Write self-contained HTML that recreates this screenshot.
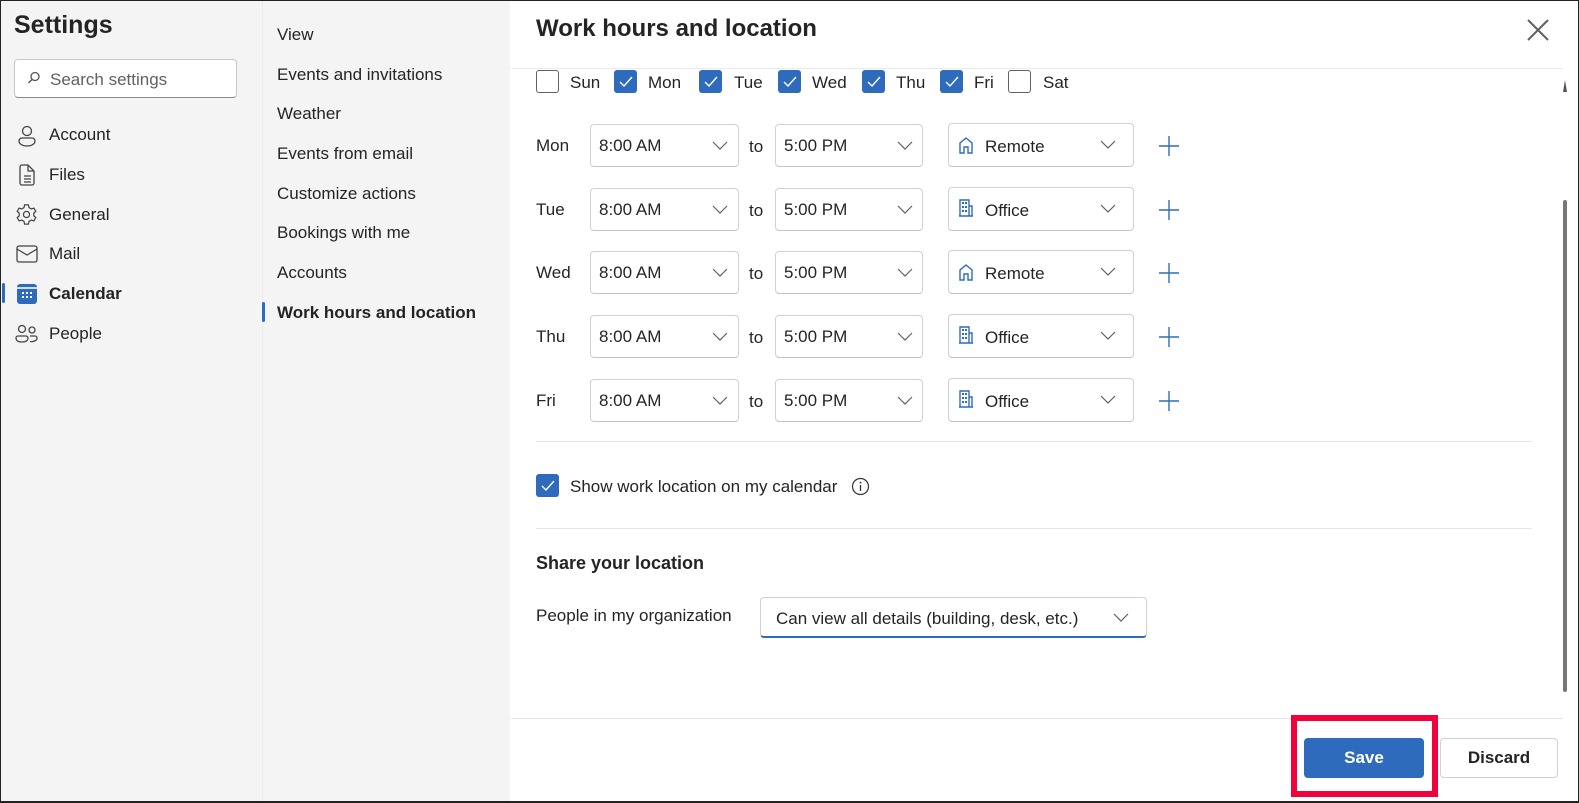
<!DOCTYPE html>
<html><head><meta charset="utf-8"><style>
*{box-sizing:border-box;margin:0;padding:0}
body{width:1579px;height:803px;overflow:hidden;font-family:"Liberation Sans",sans-serif;color:#242424;background:#fff;position:relative}
.frame{position:absolute;left:0;top:0;width:1579px;height:803px;border:1px solid #222;border-bottom:2px solid #222;pointer-events:none}
.left{position:absolute;left:1px;top:1px;width:261px;height:801px;background:#f4f4f4}
.mid{position:absolute;left:262px;top:1px;width:248px;height:801px;background:#f4f4f4;border-left:1px solid #ebebeb}
.abs{position:absolute;white-space:nowrap}
.t17{font-size:17px}
.box{position:absolute;border:1px solid #d1d1d1;border-bottom-color:#c4c4c4;border-radius:4px;background:#fff;font-size:17px}
.cb{position:absolute;width:23px;height:23px;border-radius:3px}
.on{background:#2f6bbd}
.off{border:1px solid #616161;background:#fff}
.chev{position:absolute}
</style></head><body>
<div class="left"></div>
<div class="mid"></div>
<div class="abs" style="left:14px;top:11px;font-size:25px;font-weight:600">Settings</div>
<div class="box" style="left:14px;top:59px;width:223px;height:39px;border-color:#c8c8c8;border-bottom-color:#8a8a8a"></div>
<svg class="abs" style="left:27px;top:71px" width="14" height="14" viewBox="0 0 14 14"><circle cx="8" cy="5.5" r="4" fill="none" stroke="#555" stroke-width="1.3"/><path d="M5 8.5L1.5 12" stroke="#555" stroke-width="1.4"/></svg>
<div class="abs t17" style="left:50px;top:70px;color:#616161">Search settings</div>

<svg class="abs" style="left:16px;top:125px" width="22" height="22" viewBox="0 0 22 22" fill="none" stroke="#444" stroke-width="1.3"><circle cx="11" cy="6" r="4.5"/><path d="M3 16a3 3 0 0 1 3-3h10a3 3 0 0 1 3 3c0 3-3.5 5-8 5s-8-2-8-5z"/></svg>
<div class="abs t17" style="left:49px;top:125px">Account</div>
<svg class="abs" style="left:17px;top:164px" width="20" height="22" viewBox="0 0 20 22" fill="none" stroke="#444" stroke-width="1.3"><path d="M3 3a2 2 0 0 1 2-2h6l6 6v12a2 2 0 0 1-2 2H5a2 2 0 0 1-2-2z"/><path d="M11 1v6h6M7 12h7M7 15h7M7 18h7"/></svg>
<div class="abs t17" style="left:49px;top:165px">Files</div>
<svg class="abs" style="left:15px;top:203px" width="23" height="23" viewBox="0 0 24 24" fill="none" stroke="#444" stroke-width="1.3"><circle cx="12" cy="12" r="3.2"/><path d="M10 2h4l.6 2.8 2.4 1.4 2.7-.9 2 3.4-2.1 1.9v2.8l2.1 1.9-2 3.4-2.7-.9-2.4 1.4L14 22h-4l-.6-2.8-2.4-1.4-2.7.9-2-3.4 2.1-1.9v-2.8L2.3 8.7l2-3.4 2.7.9 2.4-1.4z"/></svg>
<div class="abs t17" style="left:49px;top:205px">General</div>
<svg class="abs" style="left:16px;top:245px" width="22" height="18" viewBox="0 0 22 18" fill="none" stroke="#444" stroke-width="1.3"><rect x="1" y="1" width="20" height="16" rx="2"/><path d="M1 4l10 6 10-6"/></svg>
<div class="abs t17" style="left:49px;top:244px">Mail</div>
<div class="abs" style="left:2px;top:283px;width:3px;height:20px;background:#2f6bbd;border-radius:2px"></div>
<svg class="abs" style="left:17px;top:284px" width="20" height="20" viewBox="0 0 20 20"><rect x="0" y="0" width="20" height="20" rx="3" fill="#2f6bbd"/><rect x="0" y="3" width="20" height="2" fill="#cfe0f5"/><g fill="#fff"><rect x="5" y="8" width="2" height="2"/><rect x="9" y="8" width="2" height="2"/><rect x="13" y="8" width="2" height="2"/><rect x="5" y="12" width="2" height="2"/><rect x="9" y="12" width="2" height="2"/><rect x="13" y="12" width="2" height="2"/></g></svg>
<div class="abs t17" style="left:49px;top:284px;font-weight:700">Calendar</div>
<svg class="abs" style="left:15px;top:324px" width="24" height="20" viewBox="0 0 24 20" fill="none" stroke="#444" stroke-width="1.3"><circle cx="7" cy="5" r="3.5"/><circle cx="17" cy="6" r="3"/><path d="M1 14a2 2 0 0 1 2-2h8a2 2 0 0 1 2 2c0 3-3 4-6 4s-6-1-6-4zM15 17.5c4 .5 7-1 7-3.5a2 2 0 0 0-2-2h-5"/></svg>
<div class="abs t17" style="left:49px;top:324px">People</div>

<div class="abs t17" style="left:277px;top:25px">View</div>
<div class="abs t17" style="left:277px;top:65px">Events and invitations</div>
<div class="abs t17" style="left:277px;top:104px">Weather</div>
<div class="abs t17" style="left:277px;top:144px">Events from email</div>
<div class="abs t17" style="left:277px;top:184px">Customize actions</div>
<div class="abs t17" style="left:277px;top:223px">Bookings with me</div>
<div class="abs t17" style="left:277px;top:263px">Accounts</div>
<div class="abs" style="left:262px;top:302px;width:3px;height:20px;background:#2f6bbd;border-radius:2px"></div>
<div class="abs t17" style="left:277px;top:303px;font-weight:600">Work hours and location</div>

<div class="abs" style="left:536px;top:15px;font-size:24px;font-weight:600">Work hours and location</div>
<svg class="abs" style="left:1527px;top:19px" width="22" height="22" viewBox="0 0 22 22" stroke="#616161" stroke-width="2"><path d="M1 1l20 20M21 1L1 21"/></svg>
<div class="abs" style="left:511px;top:68px;width:1052px;height:1px;background:#ebebeb"></div>
<div class="abs" style="left:1563px;top:80px;width:4px;height:12px;background:#555;clip-path:polygon(50% 0,100% 100%,0 100%)"></div>
<div class="abs" style="left:1563px;top:200px;width:4px;height:492px;background:#777;border-radius:2px"></div>

<div class="cb off" style="left:536px;top:70px"></div><div class="abs t17" style="left:570px;top:73px">Sun</div>
<div class="cb on" style="left:614px;top:70px"></div><div class="abs t17" style="left:648px;top:73px">Mon</div>
<div class="cb on" style="left:699px;top:70px"></div><div class="abs t17" style="left:734px;top:73px">Tue</div>
<div class="cb on" style="left:778px;top:70px"></div><div class="abs t17" style="left:812px;top:73px">Wed</div>
<div class="cb on" style="left:862px;top:70px"></div><div class="abs t17" style="left:896px;top:73px">Thu</div>
<div class="cb on" style="left:940px;top:70px"></div><div class="abs t17" style="left:974px;top:73px">Fri</div>
<div class="cb off" style="left:1008px;top:70px"></div><div class="abs t17" style="left:1043px;top:73px">Sat</div>
<svg width="0" height="0" style="position:absolute"><defs>
<symbol id="ck" viewBox="0 0 23 23"><path d="M6 12l4 4 8-9" fill="none" stroke="#fff" stroke-width="1.4"/></symbol>
<symbol id="cv" viewBox="0 0 16 10"><path d="M1 1l7 7 7-7" fill="none" stroke="#616161" stroke-width="1.2"/></symbol>
<symbol id="home" viewBox="0 0 16 18"><path d="M2 17V7l6-5 6 5v10h-4v-6H6v6z" fill="none" stroke="#2f6bbd" stroke-width="1.4"/></symbol>
<symbol id="bld" viewBox="0 0 16 18"><path d="M2 17V1h9v16M11 7h3v10M1 17h14" fill="none" stroke="#2f6bbd" stroke-width="1.4"/><g fill="#2f6bbd"><rect x="4" y="3" width="2" height="2"/><rect x="7" y="3" width="2" height="2"/><rect x="4" y="7" width="2" height="2"/><rect x="7" y="7" width="2" height="2"/><rect x="4" y="11" width="2" height="2"/><rect x="7" y="11" width="2" height="2"/></g></symbol>
<symbol id="pl" viewBox="0 0 22 22"><path d="M11 1v20M1 11h20" stroke="#2f6bbd" stroke-width="1.4"/></symbol>
</defs></svg>
<svg class="abs" style="left:614px;top:70px" width="23" height="23"><use href="#ck"/></svg>
<svg class="abs" style="left:699px;top:70px" width="23" height="23"><use href="#ck"/></svg>
<svg class="abs" style="left:778px;top:70px" width="23" height="23"><use href="#ck"/></svg>
<svg class="abs" style="left:862px;top:70px" width="23" height="23"><use href="#ck"/></svg>
<svg class="abs" style="left:940px;top:70px" width="23" height="23"><use href="#ck"/></svg>

<div id="rows"></div>
<!-- rows -->
<div class="abs t17" style="left:536px;top:136px">Mon</div>
<div class="box" style="left:590px;top:124px;width:149px;height:43px"><span class="abs" style="left:8px;top:11px">8:00 AM</span><svg class="chev" style="left:121px;top:16px" width="16" height="10"><use href="#cv"/></svg></div>
<div class="abs t17" style="left:749px;top:137px">to</div>
<div class="box" style="left:775px;top:124px;width:148px;height:43px"><span class="abs" style="left:8px;top:11px">5:00 PM</span><svg class="chev" style="left:121px;top:16px" width="16" height="10"><use href="#cv"/></svg></div>
<div class="box" style="left:948px;top:123px;width:186px;height:44px"><svg class="abs" style="left:9px;top:12px" width="16" height="18"><use href="#home"/></svg><span class="abs" style="left:36px;top:13px">Remote</span><svg class="chev" style="left:151px;top:16px" width="16" height="10"><use href="#cv"/></svg></div>
<svg class="abs" style="left:1158px;top:135px" width="22" height="22"><use href="#pl"/></svg>

<div class="abs t17" style="left:536px;top:200px">Tue</div>
<div class="box" style="left:590px;top:188px;width:149px;height:43px"><span class="abs" style="left:8px;top:11px">8:00 AM</span><svg class="chev" style="left:121px;top:16px" width="16" height="10"><use href="#cv"/></svg></div>
<div class="abs t17" style="left:749px;top:201px">to</div>
<div class="box" style="left:775px;top:188px;width:148px;height:43px"><span class="abs" style="left:8px;top:11px">5:00 PM</span><svg class="chev" style="left:121px;top:16px" width="16" height="10"><use href="#cv"/></svg></div>
<div class="box" style="left:948px;top:187px;width:186px;height:44px"><svg class="abs" style="left:9px;top:11px" width="16" height="18"><use href="#bld"/></svg><span class="abs" style="left:36px;top:13px">Office</span><svg class="chev" style="left:151px;top:16px" width="16" height="10"><use href="#cv"/></svg></div>
<svg class="abs" style="left:1158px;top:199px" width="22" height="22"><use href="#pl"/></svg>

<div class="abs t17" style="left:536px;top:263px">Wed</div>
<div class="box" style="left:590px;top:251px;width:149px;height:43px"><span class="abs" style="left:8px;top:11px">8:00 AM</span><svg class="chev" style="left:121px;top:16px" width="16" height="10"><use href="#cv"/></svg></div>
<div class="abs t17" style="left:749px;top:264px">to</div>
<div class="box" style="left:775px;top:251px;width:148px;height:43px"><span class="abs" style="left:8px;top:11px">5:00 PM</span><svg class="chev" style="left:121px;top:16px" width="16" height="10"><use href="#cv"/></svg></div>
<div class="box" style="left:948px;top:250px;width:186px;height:44px"><svg class="abs" style="left:9px;top:12px" width="16" height="18"><use href="#home"/></svg><span class="abs" style="left:36px;top:13px">Remote</span><svg class="chev" style="left:151px;top:16px" width="16" height="10"><use href="#cv"/></svg></div>
<svg class="abs" style="left:1158px;top:262px" width="22" height="22"><use href="#pl"/></svg>

<div class="abs t17" style="left:536px;top:327px">Thu</div>
<div class="box" style="left:590px;top:315px;width:149px;height:43px"><span class="abs" style="left:8px;top:11px">8:00 AM</span><svg class="chev" style="left:121px;top:16px" width="16" height="10"><use href="#cv"/></svg></div>
<div class="abs t17" style="left:749px;top:328px">to</div>
<div class="box" style="left:775px;top:315px;width:148px;height:43px"><span class="abs" style="left:8px;top:11px">5:00 PM</span><svg class="chev" style="left:121px;top:16px" width="16" height="10"><use href="#cv"/></svg></div>
<div class="box" style="left:948px;top:314px;width:186px;height:44px"><svg class="abs" style="left:9px;top:11px" width="16" height="18"><use href="#bld"/></svg><span class="abs" style="left:36px;top:13px">Office</span><svg class="chev" style="left:151px;top:16px" width="16" height="10"><use href="#cv"/></svg></div>
<svg class="abs" style="left:1158px;top:326px" width="22" height="22"><use href="#pl"/></svg>

<div class="abs t17" style="left:536px;top:391px">Fri</div>
<div class="box" style="left:590px;top:379px;width:149px;height:43px"><span class="abs" style="left:8px;top:11px">8:00 AM</span><svg class="chev" style="left:121px;top:16px" width="16" height="10"><use href="#cv"/></svg></div>
<div class="abs t17" style="left:749px;top:392px">to</div>
<div class="box" style="left:775px;top:379px;width:148px;height:43px"><span class="abs" style="left:8px;top:11px">5:00 PM</span><svg class="chev" style="left:121px;top:16px" width="16" height="10"><use href="#cv"/></svg></div>
<div class="box" style="left:948px;top:378px;width:186px;height:44px"><svg class="abs" style="left:9px;top:11px" width="16" height="18"><use href="#bld"/></svg><span class="abs" style="left:36px;top:13px">Office</span><svg class="chev" style="left:151px;top:16px" width="16" height="10"><use href="#cv"/></svg></div>
<svg class="abs" style="left:1158px;top:390px" width="22" height="22"><use href="#pl"/></svg>

<div class="abs" style="left:536px;top:441px;width:996px;height:1px;background:#e6e6e6"></div>
<div class="cb on" style="left:536px;top:474px"></div>
<svg class="abs" style="left:536px;top:474px" width="23" height="23"><use href="#ck"/></svg>
<div class="abs t17" style="left:570px;top:477px">Show work location on my calendar</div>
<svg class="abs" style="left:851px;top:477px" width="19" height="19" viewBox="0 0 19 19"><circle cx="9.5" cy="9.5" r="8" fill="none" stroke="#333" stroke-width="1.2"/><path d="M9.5 8v6" stroke="#333" stroke-width="1.3"/><circle cx="9.5" cy="5.6" r="0.9" fill="#333"/></svg>
<div class="abs" style="left:536px;top:528px;width:996px;height:1px;background:#e6e6e6"></div>
<div class="abs" style="left:536px;top:553px;font-size:18px;font-weight:600">Share your location</div>
<div class="abs t17" style="left:536px;top:606px">People in my organization</div>
<div class="box" style="left:760px;top:597px;width:387px;height:41px;border-bottom:2px solid #2f6bbd"><span class="abs" style="left:15px;top:11px">Can view all details (building, desk, etc.)</span><svg class="chev" style="left:352px;top:15px" width="16" height="10"><use href="#cv"/></svg></div>

<div class="abs" style="left:511px;top:718px;width:1052px;height:1px;background:#e6e6e6"></div>
<div class="abs" style="left:1291px;top:715px;width:147px;height:82px;border:6px solid #f0033a"></div>
<div class="abs" style="left:1304px;top:738px;width:120px;height:40px;background:#2f6bbd;border-radius:4px;color:#fff;font-weight:700;font-size:17px;text-align:center;line-height:40px">Save</div>
<div class="abs" style="left:1440px;top:738px;width:118px;height:40px;border:1px solid #d1d1d1;border-radius:4px;font-weight:700;font-size:17px;text-align:center;line-height:38px">Discard</div>
<div class="frame"></div>
</body></html>
